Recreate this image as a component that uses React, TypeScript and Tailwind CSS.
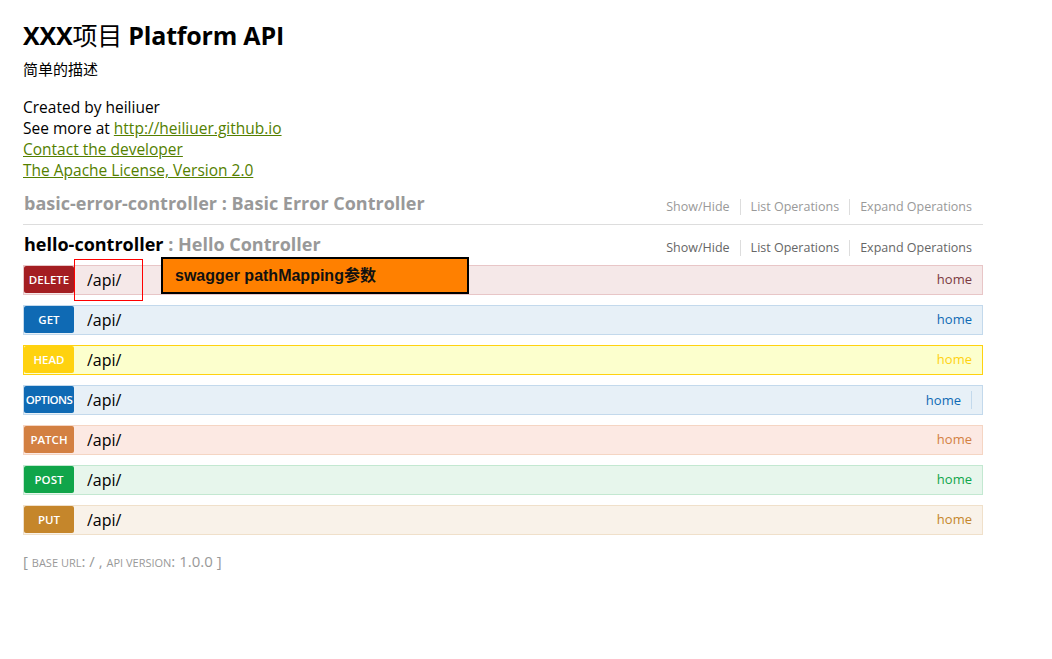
const OPS = [
  { m: "DELETE", bg: "bg-[#f5e8e8]", bd: "border-[#e8c6c7]", badge: "bg-[#a41e22]", txt: "text-[#7a3a40]" },
  { m: "GET", bg: "bg-[#e7f0f7]", bd: "border-[#c3d9ec]", badge: "bg-[#0f6ab4]", txt: "text-[#0f6ab4]" },
  { m: "HEAD", bg: "bg-[#fcffcd]", bd: "border-[#ffd20f]", badge: "bg-[#ffd20f]", txt: "text-[#ffd20f]" },
  { m: "OPTIONS", bg: "bg-[#e7f0f7]", bd: "border-[#c3d9ec]", badge: "bg-[#0f6ab4]", txt: "text-[#0f6ab4]" },
  { m: "PATCH", bg: "bg-[#fce9e3]", bd: "border-[#f5d5c3]", badge: "bg-[#d38042]", txt: "text-[#d38042]" },
  { m: "POST", bg: "bg-[#e7f6ec]", bd: "border-[#c3e8d1]", badge: "bg-[#10a54a]", txt: "text-[#10a54a]" },
  { m: "PUT", bg: "bg-[#f9f2e9]", bd: "border-[#f0e0ca]", badge: "bg-[#c5862b]", txt: "text-[#c5862b]" },
];

function ResourceLinks({ dim }: { dim?: boolean }) {
  const c = dim ? "text-[#999]" : "text-[#666]";
  return (
    <ul className={`flex items-center text-[12.5px] pr-[11px] mt-[8px] ${c}`}>
      <li className="pr-[10px] border-r border-[#ddd] leading-[16px]">Show/Hide</li>
      <li className="px-[10px] border-r border-[#ddd] leading-[16px]">List Operations</li>
      <li className="pl-[10px] leading-[16px]">Expand Operations</li>
    </ul>
  );
}

export default function App() {
  return (
    <main className="relative min-h-screen bg-white text-[#000] font-['Open_Sans','Noto_Sans_CJK_SC',sans-serif]">
      <div className="w-[960px] ml-[23px]">
        {/* info */}
        <header className="pt-[19px]">
          <h1 className="font-bold text-[25px] leading-[32px] tracking-[-0.2px]">
            XXX<span className="font-normal">项目</span> Platform API
          </h1>
          <p className="text-[15px] leading-[20px] mt-[8px]">简单的描述</p>
          <div className="mt-[18px] text-[15.5px] leading-[21px]">
            <div>Created by heiliuer</div>
            <div>
              See more at <a className="underline text-[#547f00]">http://heiliuer.github.io</a>
            </div>
            <div><a className="underline text-[#547f00]">Contact the developer</a></div>
            <div><a className="underline text-[#547f00]">The Apache License, Version 2.0</a></div>
          </div>
        </header>

        {/* resources */}
        <section className="mt-[9px]">
          <div className="flex items-center justify-between border-b border-[#ddd] pb-[8px] pl-[1px]">
            <h2 className="font-bold text-[18px] leading-[26px] text-[#999]">basic-error-controller : Basic Error Controller</h2>
            <ResourceLinks dim />
          </div>
          <div className="flex items-center justify-between pt-[6px] pb-[8px] pl-[1px]">
            <h2 className="font-bold text-[18px] leading-[26px] text-[#999]">
              <span className="text-black">hello-controller</span> : Hello Controller
            </h2>
            <ResourceLinks />
          </div>
          <ul className="flex flex-col gap-[10px]">
            {OPS.map((o) => (
              <li key={o.m} className={`flex items-center h-[30px] border ${o.bg} ${o.bd}`}>
                <span
                  className={`w-[50px] h-[27px] self-start rounded-[2px] text-white font-semibold text-[11.5px] flex items-center justify-center ${o.badge} ${o.m === "OPTIONS" ? "tracking-[-0.6px]" : ""}`}
                >
                  {o.m}
                </span>
                <span className="ml-[13px] text-[16px] flex-1">/api/</span>
                <span
                  className={`text-[13px] ${o.txt} ${o.m === "OPTIONS" ? "pr-[10px] mr-[10px] border-r border-[#c3d9ec] leading-[18px]" : "mr-[10px]"}`}
                >
                  home
                </span>
              </li>
            ))}
          </ul>
        </section>

        <footer className="mt-[15px] text-[#999] text-[15px]">
          [ <span className="text-[11px] uppercase">base url</span>: / , <span className="text-[11px] uppercase">api version</span>: 1.0.0 ]
        </footer>
      </div>

      {/* annotations */}
      <div className="absolute left-[74px] top-[259px] w-[69px] h-[42px] border border-[#ff0000]" />
      <div className="absolute left-[161px] top-[257px] w-[308px] h-[37px] border-2 border-black bg-[#ff8000] pl-[12px] flex items-center font-['Liberation_Sans','Noto_Sans_CJK_SC',sans-serif] font-bold text-[16px] text-[#111]">
        swagger pathMapping参数
      </div>
    </main>
  );
}
